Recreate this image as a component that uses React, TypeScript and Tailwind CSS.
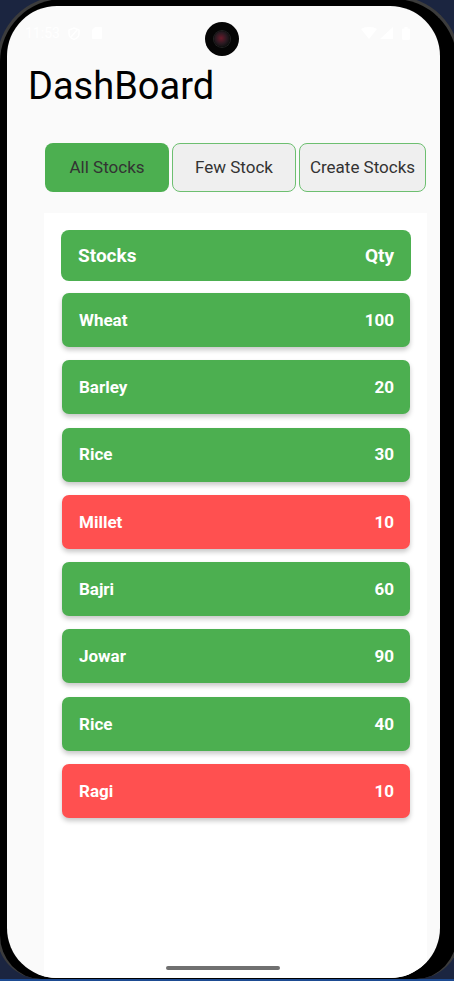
import React from "react";

type Stock = { name: string; qty: number };

const stocks: Stock[] = [
  { name: "Wheat", qty: 100 },
  { name: "Barley", qty: 20 },
  { name: "Rice", qty: 30 },
  { name: "Millet", qty: 10 },
  { name: "Bajri", qty: 60 },
  { name: "Jowar", qty: 90 },
  { name: "Rice", qty: 40 },
  { name: "Ragi", qty: 10 },
];

const font = { fontFamily: "Roboto, 'Noto Sans', sans-serif" };

function StatusBar() {
  return (
    <div className="flex h-[54px] items-center justify-between pl-[18px] pr-[30px] text-white">
      <div className="flex items-center gap-[8px]">
        <span className="text-[14px] leading-none">11:53</span>
        <svg width="12" height="13" viewBox="0 0 12 13" fill="none" stroke="white" strokeWidth="1.4">
          <path d="M6 1 L11 3 V6.5 C11 9.5 8.8 11.5 6 12.3 C3.2 11.5 1 9.5 1 6.5 V3 Z" />
          <path d="M3 10 L9.5 2.5" />
        </svg>
        <svg width="10" height="12" viewBox="0 0 10 12" className="ml-[4px]">
          <path d="M3 0 H9 a1 1 0 0 1 1 1 V11 a1 1 0 0 1 -1 1 H1 a1 1 0 0 1 -1 -1 V3 Z" fill="white" />
        </svg>
      </div>
      <div className="flex items-center gap-[3px]">
        <svg width="16" height="12" viewBox="0 0 16 12">
          <path d="M0 2 C4.5 -0.7 11.5 -0.7 16 2 L8 12 Z" fill="white" />
        </svg>
        <svg width="13" height="12" viewBox="0 0 13 12">
          <path d="M13 0 V12 H0 Z" fill="white" />
        </svg>
        <svg width="8" height="13" viewBox="0 0 8 13" className="ml-[6px]">
          <rect x="2.5" y="0" width="3" height="2" fill="white" />
          <rect x="0" y="1.5" width="8" height="11.5" rx="1.2" fill="white" />
        </svg>
      </div>
    </div>
  );
}

function Tabs() {
  return (
    <div className="ml-[38px] mt-[38px] flex h-[49px] gap-[3px] text-[17px] text-[#333]">
      <div className="flex w-[124px] items-center justify-center rounded-[8px] bg-[#4caf50] pt-px">All Stocks</div>
      <div className="flex w-[124px] items-center justify-center rounded-[8px] border border-[#6dbf70] bg-[#efefef] pt-px">
        Few Stock
      </div>
      <div className="flex w-[127px] items-center justify-center rounded-[8px] border border-[#6dbf70] bg-[#efefef] pt-px">
        Create Stocks
      </div>
    </div>
  );
}

function StockRow({ item }: { item: Stock }) {
  const low = item.qty <= 10;
  return (
    <div
      className={
        "mx-px flex h-[54px] items-center justify-between rounded-[7px] pl-[17px] pr-[16px] pt-px text-[17px] font-bold text-white shadow-[0_3px_5px_rgba(0,0,0,0.22)] " +
        (low ? "bg-[#ff5050]" : "bg-[#4caf50]")
      }
    >
      <span>{item.name}</span>
      <span>{item.qty}</span>
    </div>
  );
}

export default function App() {
  return (
    <div className="flex h-[981px] w-[454px] flex-col overflow-hidden bg-[#1b2540]" style={font}>
      <div className="-ml-[3px] -mt-[4px] flex h-[983px] w-[463px] shrink-0 flex-col rounded-t-[66px] rounded-b-[44px] border-[3px] border-b-0 border-[#3c3c3c] bg-black pb-px pl-[7px] pr-[17px] pt-[7px]">
        <div className="relative flex flex-1 flex-col overflow-hidden rounded-[50px] bg-[#fafafa]">
          <StatusBar />
          <div className="mt-[7px] pl-[21px] text-[38px] leading-none text-black">DashBoard</div>
          <Tabs />
          <div className="ml-[37px] mr-[13px] mt-[21px] flex flex-1 flex-col bg-white pl-[17px] pr-[16px] pt-[17px]">
            <div className="flex h-[51px] items-center justify-between rounded-[8px] bg-[#4caf50] px-[17px] pt-px text-[19px] font-bold text-white">
              <span>Stocks</span>
              <span>Qty</span>
            </div>
            <div className="mt-[12px] flex flex-col gap-[13.3px]">
              {stocks.map((s, i) => (
                <StockRow key={i} item={s} />
              ))}
            </div>
          </div>
          <div className="absolute left-[198px] top-[16px] flex h-[34px] w-[34px] items-center justify-center rounded-full bg-[#050505]">
            <div className="h-[16px] w-[16px] rounded-full bg-[radial-gradient(circle_at_45%_45%,#6b1a2a_0%,#2a1a22_45%,#111_70%)] ring-1 ring-[#222]" />
          </div>
          <div className="absolute bottom-[8px] left-[159px] h-[4px] w-[114px] rounded-full bg-[#707070]" />
        </div>
      </div>
      <div className="h-[2px] shrink-0 bg-[#1d4b92]" />
    </div>
  );
}
